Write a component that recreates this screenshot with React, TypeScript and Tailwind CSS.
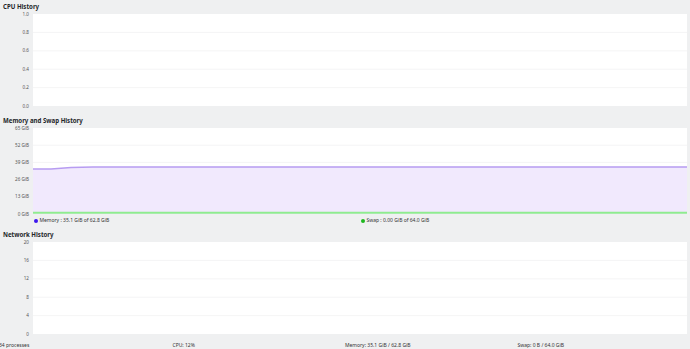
import React from "react";

const font = { fontFamily: '"Noto Sans", "Open Sans", sans-serif' };

function Labels({ items }: { items: string[] }) {
  return (
    <div className="w-[33px] shrink-0 flex flex-col justify-between pr-[4px]">
      {items.map((t) => (
        <div key={t} className="h-0 flex items-center justify-end text-[4.6px] text-[#555] whitespace-nowrap">
          {t}
        </div>
      ))}
    </div>
  );
}

function Grid({ w, h }: { w: number; h: number }) {
  const lines = [1, 2, 3, 4].map((i) => (i * h) / 5);
  return (
    <>
      {lines.map((y) => (
        <line key={y} x1="0" x2={w} y1={y} y2={y} stroke="#f1f1f2" strokeWidth="0.8" />
      ))}
    </>
  );
}

function Title({ children }: { children: React.ReactNode }) {
  return <div className="h-[14px] pl-[3px] flex items-center text-[6.1px] font-bold text-[#232629] leading-none">{children}</div>;
}

export default function App() {
  return (
    <div className="w-[690px] h-[349px] bg-[#eff0f1] flex flex-col overflow-hidden" style={font}>
      {/* CPU */}
      <Title>CPU History</Title>
      <div className="flex h-[92px] pr-[3px]">
        <Labels items={["1.0", "0.8", "0.6", "0.4", "0.2", "0.0"]} />
        <div className="flex-1 bg-white">
          <svg className="w-full h-full block" viewBox="0 0 654 92" preserveAspectRatio="none">
            <Grid w={654} h={92} />
          </svg>
        </div>
      </div>

      {/* Memory */}
      <div className="h-[8px]" />
      <Title>Memory and Swap History</Title>
      <div className="flex h-[86px] pr-[3px]">
        <Labels items={["65 GiB", "52 GiB", "39 GiB", "26 GiB", "13 GiB", "0 GiB"]} />
        <div className="flex-1 bg-white">
          <svg className="w-full h-full block" viewBox="0 0 654 86" preserveAspectRatio="none">
            <Grid w={654} h={86} />
            <path d="M0 41 L18 41 L38 39.5 L60 39 L654 39 L654 86 L0 86 Z" fill="#f1e9fd" />
            <path d="M0 41 L18 41 L38 39.5 L60 39 L654 39" fill="none" stroke="#b79cf1" strokeWidth="1.3" />
            <line x1="0" x2="654" y1="84.8" y2="84.8" stroke="#8fec8f" strokeWidth="2" />
          </svg>
        </div>
      </div>
      <div className="h-[14px] flex pr-[3px]">
        <div className="w-[33px] shrink-0" />
        <div className="flex-1 grid grid-cols-2 items-center pb-[1px] text-[5px] text-[#333]">
          <div className="flex items-center gap-[1.5px] pl-[1px]">
            <span className="w-[4px] h-[4px] rounded-full bg-[#3d17ee]" />
            <span>Memory : 35.1 GiB of 62.8 GiB</span>
          </div>
          <div className="flex items-center gap-[1.5px] pl-[1px]">
            <span className="w-[4px] h-[4px] rounded-full bg-[#1fb81f]" />
            <span>Swap : 0.00 GiB of 64.0 GiB</span>
          </div>
        </div>
      </div>

      {/* Network */}
      <Title>Network History</Title>
      <div className="flex h-[92px] pr-[3px]">
        <Labels items={["20", "16", "12", "8", "4", "0"]} />
        <div className="flex-1 bg-white">
          <svg className="w-full h-full block" viewBox="0 0 654 92" preserveAspectRatio="none">
            <Grid w={654} h={92} />
          </svg>
        </div>
      </div>

      {/* Status bar */}
      <div className="flex-1 grid grid-cols-4 items-end pb-[0.5px] text-[5px] text-[#333] leading-[8px]">
        <div className="-ml-[1px]">34 processes</div>
        <div>CPU: 12%</div>
        <div>Memory: 35.1 GiB / 62.8 GiB</div>
        <div>Swap: 0 B / 64.0 GiB</div>
      </div>
    </div>
  );
}
